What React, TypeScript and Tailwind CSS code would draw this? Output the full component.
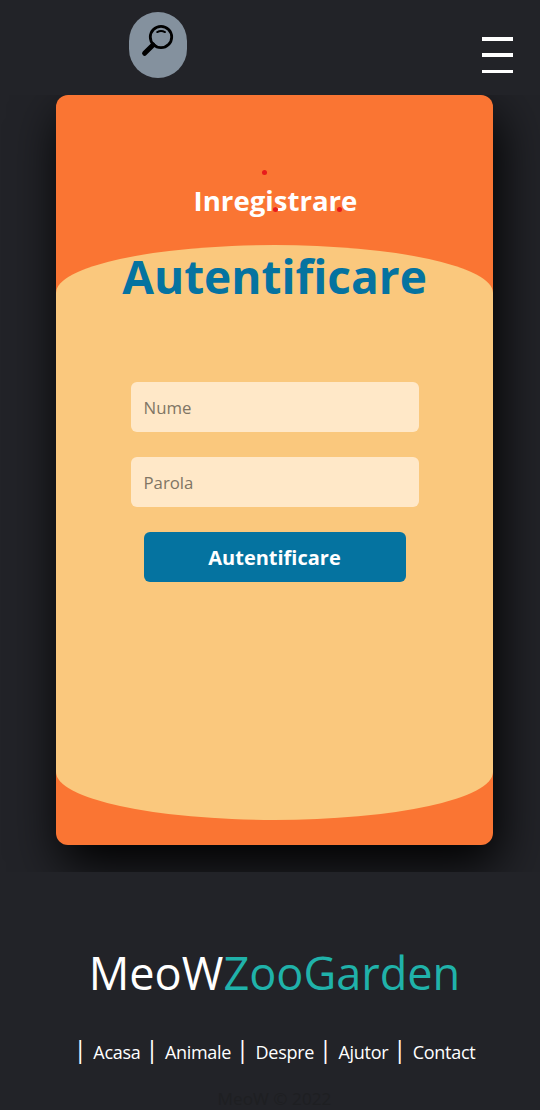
import React from "react";

const links = ["Acasa", "Animale", "Despre", "Ajutor", "Contact"];

function SearchIcon() {
  return (
    <svg width="33" height="33" viewBox="0 0 33 33" fill="none" stroke="#000" strokeLinecap="round">
      <circle cx="20" cy="13" r="10.7" strokeWidth="2.8" />
      <path d="M12 20.9 3.6 29.3" strokeWidth="5" />
      <path d="M16.2 8.1Q20 5.9 24 8.1" strokeWidth="1.9" />
    </svg>
  );
}

export default function App() {
  return (
    <div className="flex h-[1110px] w-[540px] flex-col overflow-hidden bg-[#222328] font-['Open_Sans',sans-serif]">
      <header className="relative z-10 flex h-[95px] shrink-0 justify-between bg-[#222328] pl-[129px] pr-[27px]">
        <button className="mt-3 flex h-[66px] w-[58px] justify-center rounded-[30px] bg-[#84919e] pr-[2px] pt-3" aria-label="Search">
          <SearchIcon />
        </button>
        <div className="mt-[37px] flex h-9 w-[31px] flex-col">
          <span className="h-1 bg-white" />
          <span className="mt-3 h-1 bg-white" />
          <span className="mt-[13px] h-[3px] bg-white" />
        </div>
      </header>
      <main className="h-[777px] shrink-0 pl-14">
        <section className="relative flex h-[750px] w-[437px] flex-col overflow-hidden rounded-[12px] bg-[#fa7533] shadow-[5px_20px_50px_#000]">
          <h2 className="mt-[84px] h-[66px] pl-[2px] text-center text-[27.6px] font-bold leading-[42px] text-white">Inregistrare</h2>
          <span className="absolute left-[206px] top-[75px] size-[5px] rounded-full bg-[#e81c1c]" />
          <span className="absolute left-[217px] top-[112px] size-[5px] rounded-full bg-[#e81c1c]" />
          <span className="absolute left-[281px] top-[112px] size-[5px] rounded-full bg-[#e81c1c]" />
          <form className="flex h-[575px] flex-col items-center rounded-[50%/8.333%] bg-[#fac87d]">
            <h1 className="h-[137px] text-[46px] font-bold leading-[63px] text-[#0573a0]">Autentificare</h1>
            <input className="mb-[25px] h-[50px] w-[288px] rounded-[6px] bg-[#ffe8c8] px-[13px] text-[16.8px] outline-none placeholder:text-[#807564]" placeholder="Nume" />
            <input className="mb-[25px] h-[50px] w-[288px] rounded-[6px] bg-[#ffe8c8] px-[13px] text-[16.8px] outline-none placeholder:text-[#807564]" placeholder="Parola" />
            <button type="button" className="h-[50px] w-[262px] rounded-[6px] bg-[#0573a0] pt-[2px] text-[20px] font-bold text-white">Autentificare</button>
          </form>
        </section>
      </main>
      <footer className="relative z-10 flex h-[238px] shrink-0 flex-col items-center bg-[#222328]">
        <p className="mt-[69px] pl-[9px] text-[45.1px] leading-[64px] text-white">
          MeoW<span className="text-[#20b2aa]">ZooGarden</span>
        </p>
        <nav className="mt-[35px] flex h-[25px] w-full pl-[79.3px] text-[18px] leading-6 text-white">
          {links.map((label) => (
            <a key={label} className="mr-[10.5px] flex whitespace-nowrap tracking-[-0.3px]">
              <span className="-mt-1 mr-3 flex w-[2px] justify-center text-[24.5px] leading-[25px] tracking-normal">|</span>
              {label}
            </a>
          ))}
        </nav>
        <p className="mt-[23px] pl-[9px] text-[17.2px] leading-[22px] text-[#1e1f22]">MeoW © 2022</p>
      </footer>
    </div>
  );
}
